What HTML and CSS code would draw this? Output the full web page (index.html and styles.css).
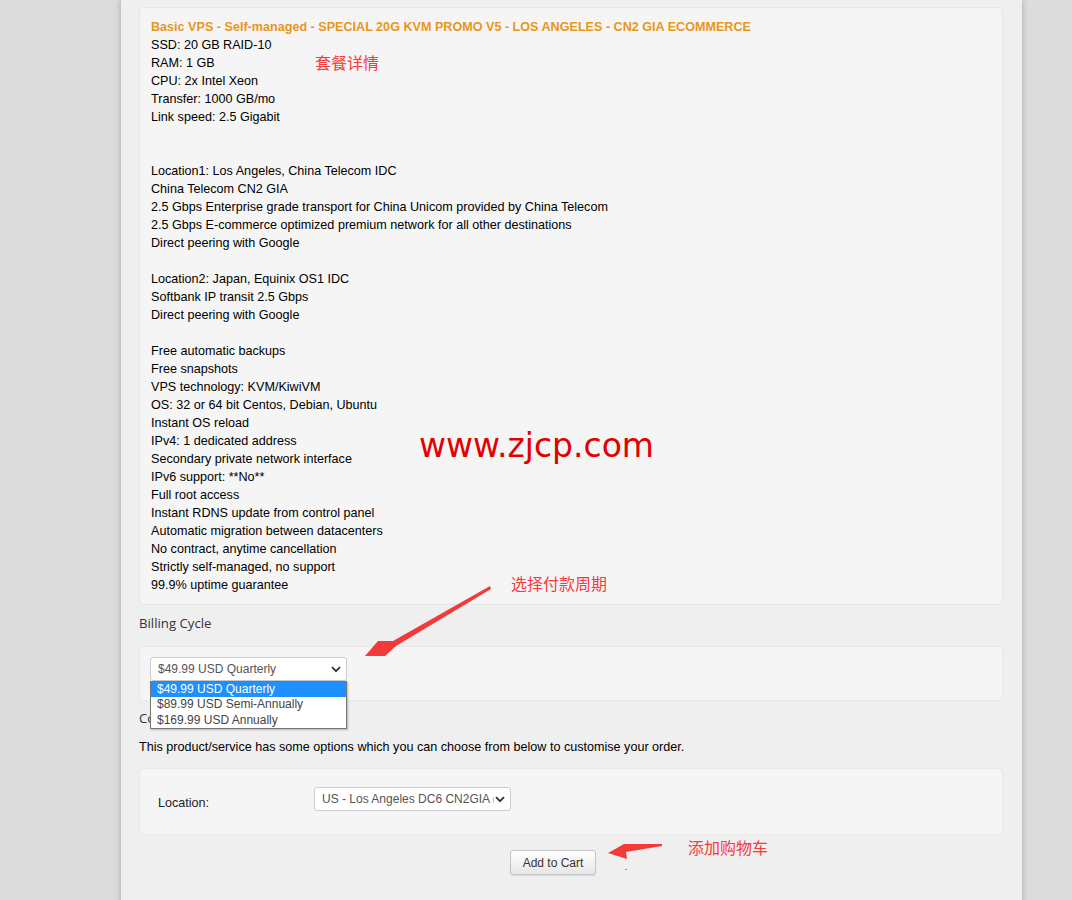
FILE: index.html
```html
<!DOCTYPE html>
<html lang="en">
<head>
    <meta charset="UTF-8">
    <meta name="viewport" content="width=device-width, initial-scale=1.0">
    <title>Configure Product</title>
    <link rel="stylesheet" href="styles.css">
</head>
<body>
    <div class="container">
        <div class="product-info">
            <div class="product-title">Basic VPS - Self-managed - SPECIAL 20G KVM PROMO V5 - LOS ANGELES - CN2 GIA ECOMMERCE</div>
            <div class="product-desc">
                SSD: 20 GB RAID-10<br>
                RAM: 1 GB<br>
                CPU: 2x Intel Xeon<br>
                Transfer: 1000 GB/mo<br>
                Link speed: 2.5 Gigabit<br>
                <br>
                <br>
                Location1: Los Angeles, China Telecom IDC<br>
                China Telecom CN2 GIA<br>
                2.5 Gbps Enterprise grade transport for China Unicom provided by China Telecom<br>
                2.5 Gbps E-commerce optimized premium network for all other destinations<br>
                Direct peering with Google<br>
                <br>
                Location2: Japan, Equinix OS1 IDC<br>
                Softbank IP transit 2.5 Gbps<br>
                Direct peering with Google<br>
                <br>
                Free automatic backups<br>
                Free snapshots<br>
                VPS technology: KVM/KiwiVM<br>
                OS: 32 or 64 bit Centos, Debian, Ubuntu<br>
                Instant OS reload<br>
                IPv4: 1 dedicated address<br>
                Secondary private network interface<br>
                IPv6 support: **No**<br>
                Full root access<br>
                Instant RDNS update from control panel<br>
                Automatic migration between datacenters<br>
                No contract, anytime cancellation<br>
                Strictly self-managed, no support<br>
                99.9% uptime guarantee
            </div>
        </div>

        <h3 class="section-title billing-title">Billing Cycle</h3>
        <div class="option-box billing-box">
            <div class="select-wrap billing-select">
                <select class="select" id="billing-cycle">
                    <option selected>$49.99 USD Quarterly</option>
                    <option>$89.99 USD Semi-Annually</option>
                    <option>$169.99 USD Annually</option>
                </select>
                <svg class="chevron" width="10" height="7" viewBox="0 0 10 7"><path d="M1 1.2 L5 5.2 L9 1.2" fill="none" stroke="#333" stroke-width="1.8"/></svg>
                <ul class="dropdown-list">
                    <li class="active">$49.99 USD Quarterly</li>
                    <li>$89.99 USD Semi-Annually</li>
                    <li>$169.99 USD Annually</li>
                </ul>
            </div>
        </div>

        <h3 class="section-title config-title">Configurable Options</h3>
        <p class="config-note">This product/service has some options which you can choose from below to customise your order.</p>
        <div class="option-box location-box">
            <label class="location-label" for="location">Location:</label>
            <div class="select-wrap location-select">
                <select class="select" id="location">
                    <option>US - Los Angeles DC6 CN2GIA (</option>
                </select>
                <svg class="chevron" width="10" height="7" viewBox="0 0 10 7"><path d="M1 1.2 L5 5.2 L9 1.2" fill="none" stroke="#333" stroke-width="1.8"/></svg>
            </div>
        </div>

        <div class="cart-row">
            <button class="cart-btn">Add to Cart</button>
        </div>
    </div>

    <!-- screenshot annotations -->
    <div class="note note-details">套餐详情</div>
    <div class="watermark">www.zjcp.com</div>
    <div class="note note-billing">选择付款周期</div>
    <div class="note note-cart">添加购物车</div>
    <svg class="arrows" width="1072" height="900" viewBox="0 0 1072 900">
        <polygon points="490,586 393,641 378,641 365,656 385,656 396,646 491,589" fill="#f33a3a"/>
        <polygon points="662,844 624,844 608,853 627,859 626,852 662,846" fill="#f33a3a"/>
        <rect x="625" y="869" width="2" height="1" fill="#8888aa"/>
    </svg>
</body>
</html>
```

FILE: styles.css
```css
body {
    margin: 0;
    background-color: #dcdcdc;
    font-family: "Liberation Sans", Arial, sans-serif;
    font-size: 12.6px;
    color: #000;
    position: relative;
    height: 900px;
    overflow: hidden;
}

.container {
    width: 864px;
    margin-left: 121px;
    padding: 7px 19px 30px 18px;
    background-color: #efefef;
    box-shadow: 0 0 6px rgba(0, 0, 0, 0.25);
    min-height: 900px;
}

.product-info {
    background-color: #f5f5f5;
    border: 1px solid #e6e6e6;
    border-radius: 4px;
    padding: 10px 11px 10px;
}

.product-title {
    color: #e8961c;
    font-weight: bold;
    font-size: 12.6px;
    line-height: 18px;
}

.product-desc {
    line-height: 18px;
}

.section-title {
    font-family: "Open Sans", sans-serif;
    font-weight: normal;
    font-size: 13.2px;
    color: #333;
    margin: 0;
    line-height: 20px;
}

.billing-title {
    margin-top: 8px;
}

.option-box {
    background-color: #f5f5f5;
    border: 1px solid #e8e8e8;
    border-radius: 4px;
}

.billing-box {
    margin-top: 13px;
    height: 55px;
    padding: 10px 0 0 10px;
    box-sizing: border-box;
}

.select-wrap {
    position: relative;
    width: 197px;
}

.select {
    appearance: none;
    -webkit-appearance: none;
    width: 100%;
    height: 24px;
    border: 1px solid #ccc;
    border-radius: 3px;
    background-color: #fff;
    font-family: "Liberation Sans", Arial, sans-serif;
    font-size: 12px;
    color: #555;
    padding: 0 22px 0 7px;
    margin: 0;
}

.location-select .select {
    padding-right: 16px;
}

.chevron {
    position: absolute;
    right: 6px;
    top: 9px;
}

.dropdown-list {
    position: absolute;
    left: 0;
    top: 24px;
    width: 197px;
    box-sizing: border-box;
    margin: 0;
    padding: 0;
    list-style: none;
    background-color: #fff;
    border: 1px solid #767676;
    box-shadow: 1px 1px 2px rgba(0, 0, 0, 0.25);
    font-size: 12px;
    z-index: 2;
}

.dropdown-list li {
    height: 15.4px;
    line-height: 15.4px;
    padding-left: 6px;
    color: #444;
}

.dropdown-list li.active {
    background-color: #1e90ff;
    color: #fff;
}

.config-title {
    margin-top: 7px;
}

.config-note {
    margin: 10px 0 0;
    line-height: 18px;
}

.location-box {
    margin-top: 12px;
    height: 67px;
    box-sizing: border-box;
    display: flex;
    align-items: flex-start;
    padding: 18px 0 0 18px;
}

.location-label {
    width: 156px;
    margin-top: 9px;
    color: #222;
}

.cart-row {
    padding: 15px 0 0 371px;
}

.cart-btn {
    width: 86px;
    height: 25px;
    font-family: "Liberation Sans", Arial, sans-serif;
    font-size: 12px;
    color: #333;
    background: linear-gradient(#ffffff, #e6e6e6);
    border: 1px solid #c4c4c4;
    border-radius: 3px;
    box-shadow: 0 1px 1px rgba(0, 0, 0, 0.1);
    cursor: pointer;
}

.note {
    position: absolute;
    font-family: "Noto Sans CJK SC", sans-serif;
    font-size: 16px;
    line-height: 20px;
    color: #f53b3b;
}

.note-details {
    left: 315px;
    top: 52px;
}

.note-billing {
    left: 511px;
    top: 573px;
}

.note-cart {
    left: 688px;
    top: 837px;
}

.watermark {
    position: absolute;
    left: 419px;
    top: 426px;
    font-family: "DejaVu Sans", sans-serif;
    font-size: 33px;
    line-height: 40px;
    color: #e20000;
}

.arrows {
    position: absolute;
    left: 0;
    top: 0;
    pointer-events: none;
}
```
